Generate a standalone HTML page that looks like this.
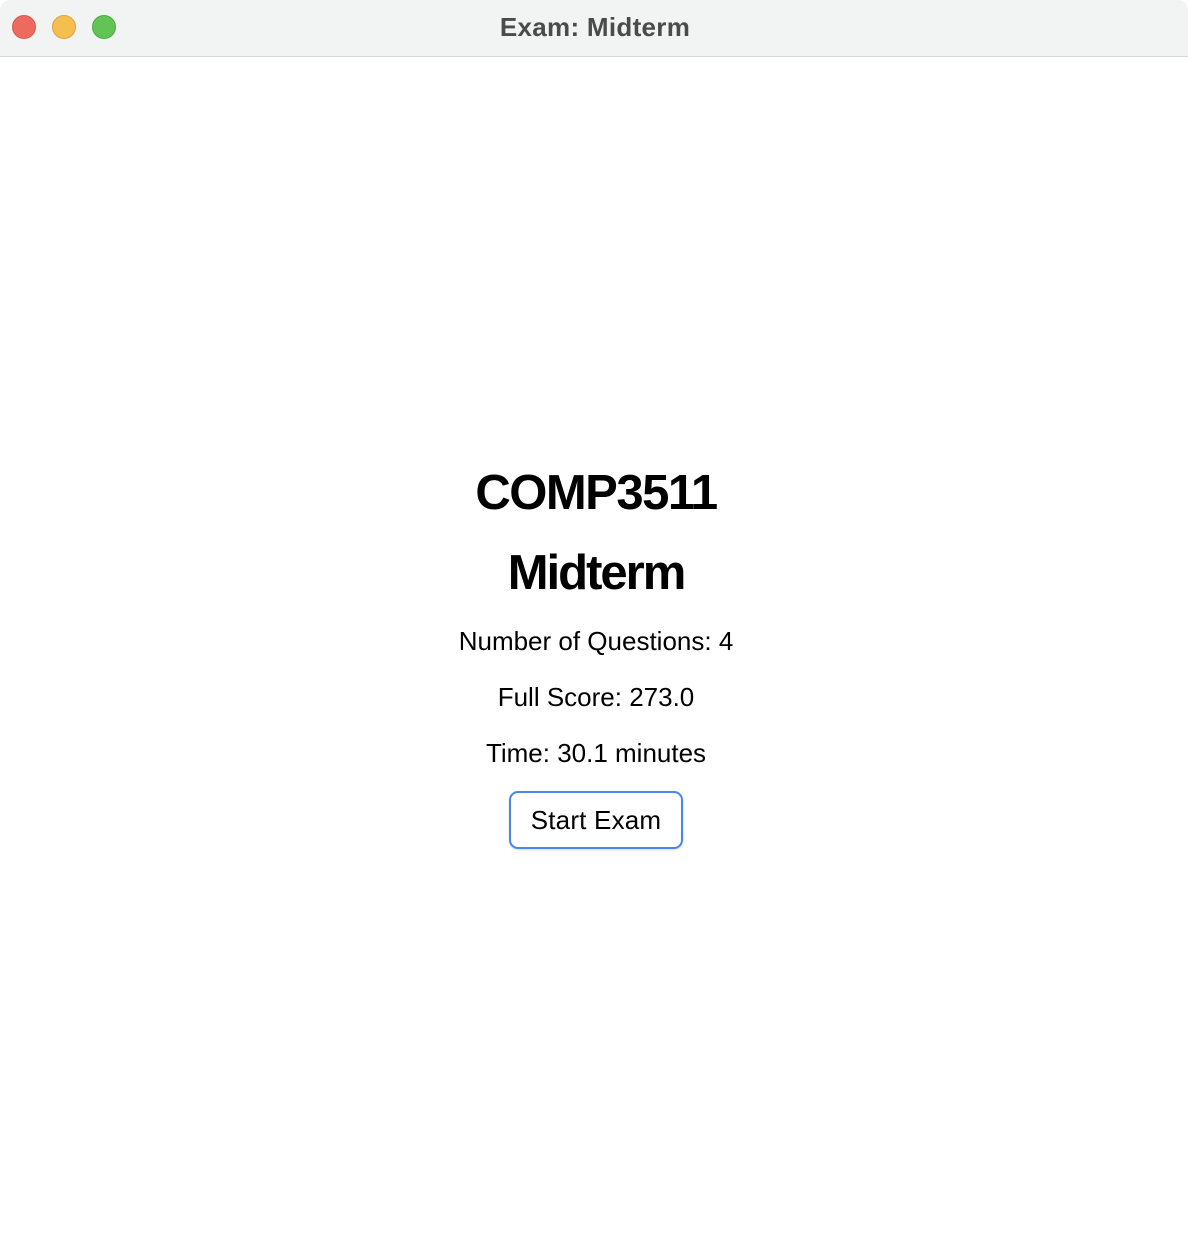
<!DOCTYPE html>
<html><head><meta charset="utf-8"><style>
html,body{margin:0;padding:0;width:1188px;height:1252px;background:#fff;overflow:hidden;font-family:"Liberation Sans",sans-serif;}
.bar{position:absolute;left:0;top:0;width:1188px;height:56px;background:#f2f3f3;border-bottom:1px solid #d6d6d6;border-radius:10px 10px 0 0;}
.dot{position:absolute;top:15px;width:24px;height:24px;border-radius:50%;box-sizing:border-box;}
.title{position:absolute;top:0;left:0;width:1190px;line-height:55px;text-align:center;font-weight:bold;font-size:26px;letter-spacing:0.3px;color:#4b4b4b;}
.t{position:absolute;left:0;width:1192px;text-align:center;color:#000;white-space:nowrap;}
.h{font-weight:bold;font-size:49px;letter-spacing:-1.5px;}
.b{font-size:26px;letter-spacing:0px;}
.btn{position:absolute;left:509px;top:791px;width:174px;height:58px;box-sizing:border-box;border:2px solid #4a86ef;border-radius:9px;text-align:center;line-height:55px;font-size:26px;letter-spacing:0.2px;box-shadow:0 1px 2px rgba(0,0,0,.15);}
</style></head><body>
<div class="bar">
<div class="dot" style="left:12px;background:#ed6a5e;border:1px solid #d35a50"></div>
<div class="dot" style="left:52px;background:#f5bf4f;border:1px solid #d9a440"></div>
<div class="dot" style="left:92px;background:#61c454;border:1px solid #4fa943"></div>
<div class="title">Exam: Midterm</div>
</div>
<div class="t h" style="top:463px;line-height:60px">COMP3511</div>
<div class="t h" style="top:543px;line-height:60px;letter-spacing:-2px">Midterm</div>
<div class="t b" style="top:625px;line-height:32px">Number of Questions: 4</div>
<div class="t b" style="top:681px;line-height:32px">Full Score: 273.0</div>
<div class="t b" style="top:737px;line-height:32px">Time: 30.1 minutes</div>
<div class="btn">Start Exam</div>
</body></html>
